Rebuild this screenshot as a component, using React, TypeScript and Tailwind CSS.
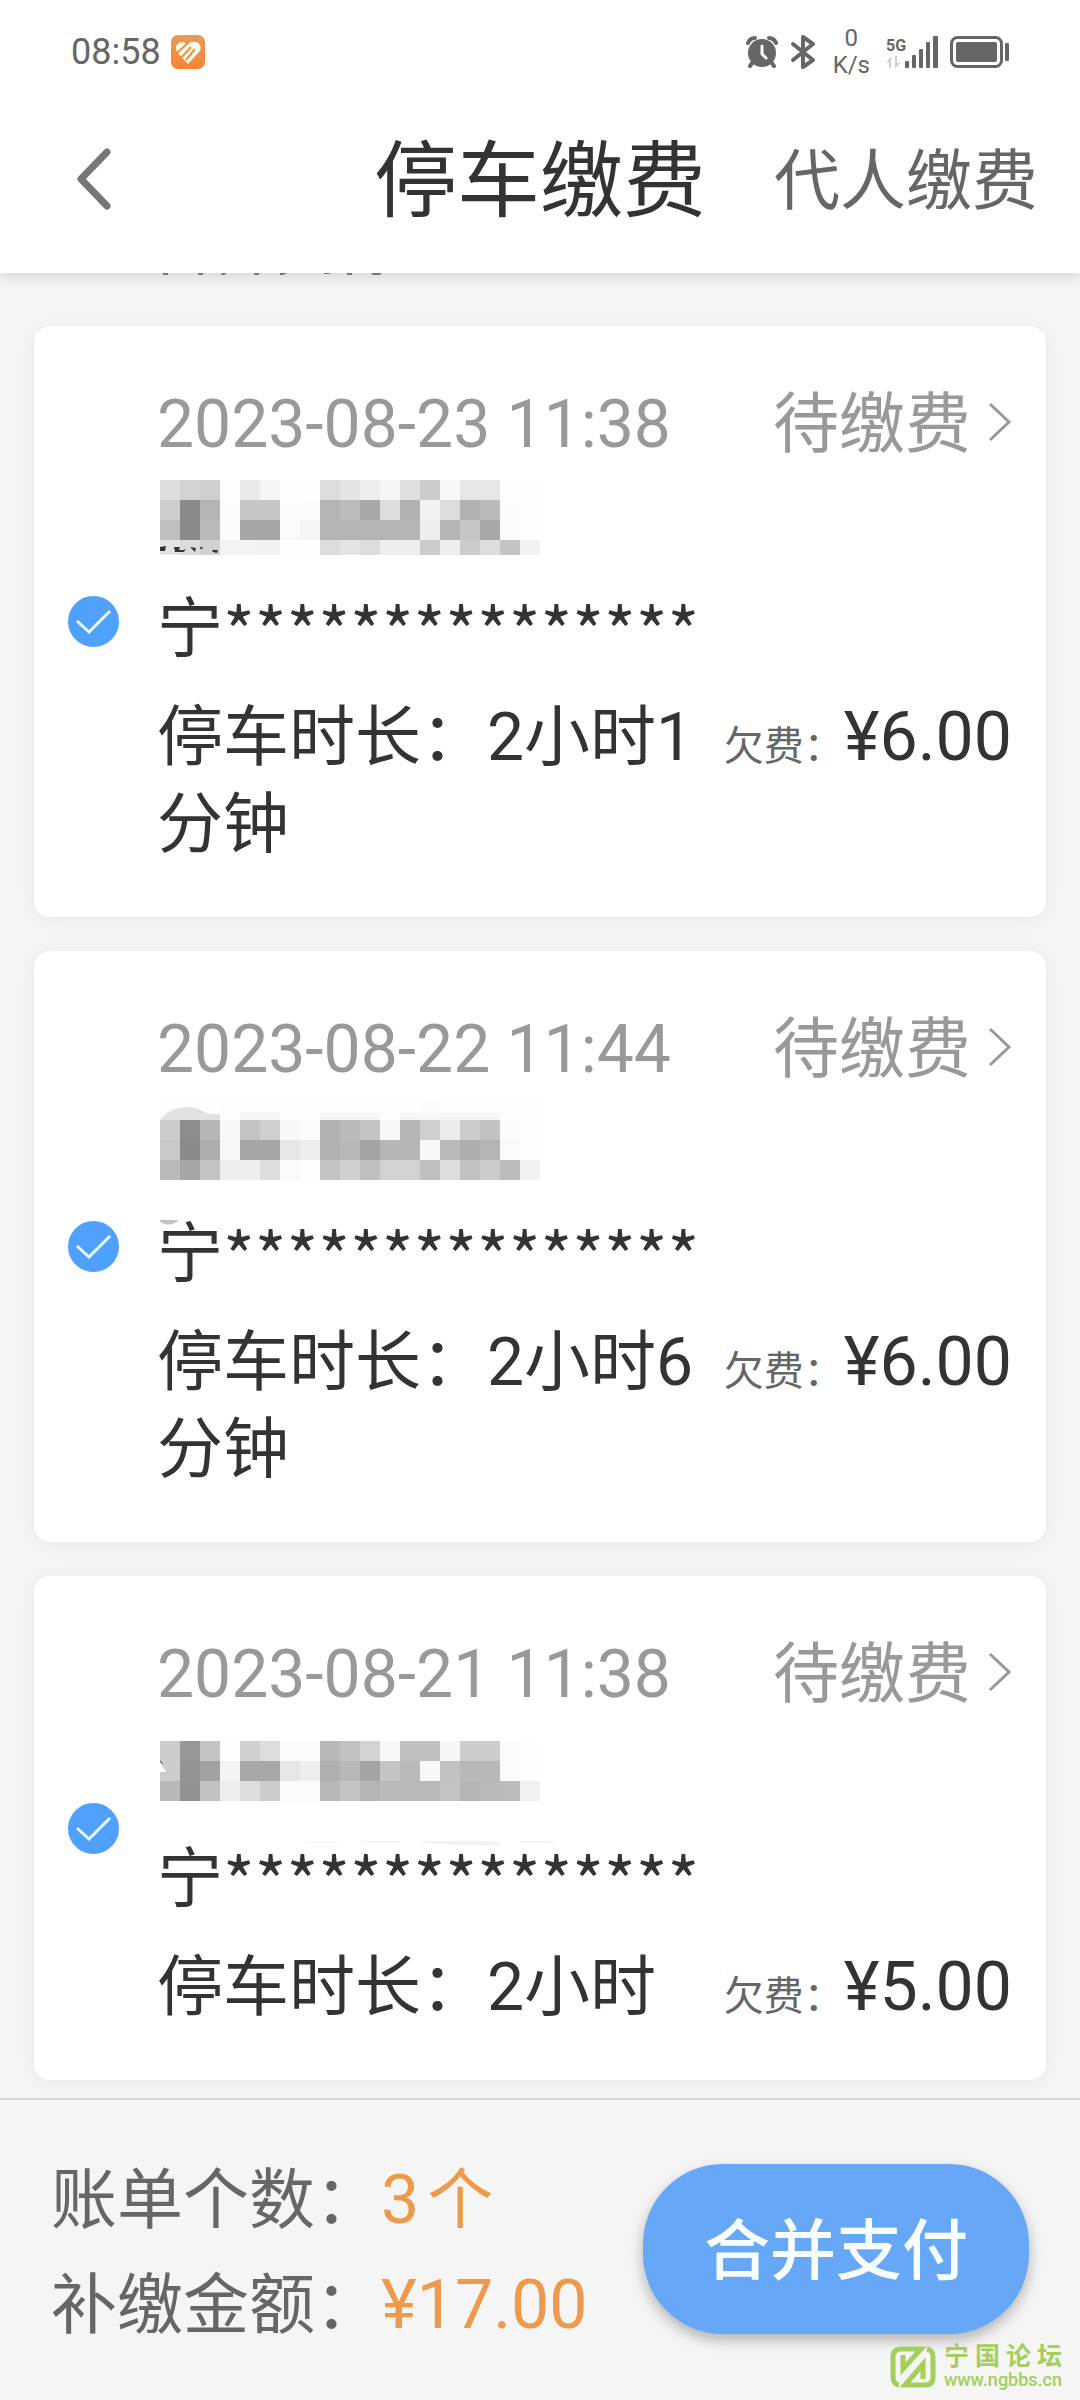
import { useState } from "react";

type Bill = {
  id: string;
  time: string;
  plate: string;
  duration: string;
  fee: number;
  mask: { top: number; rows: string[]; marks?: { d: string; fill: string }[] };
};

/* Each mask row lists two-digit hex grey levels, one for each 20px block. */
const bills: Bill[] = [
  {
    id: "b1",
    time: "2023-08-23 11:38",
    plate: "***************",
    duration: "2小时1分钟",
    fee: 6,
    mask: {
      top: 0,
      rows: [
        "dd d2 cf fd ea f5 fe fe dd e4 ee f5 e0 cc f8 e6 e6 fe fe",
        "ce 8a b4 fc c6 c6 fc fb b4 bc a8 dd b2 f2 dd b2 ba fc fe",
        "bf 8a ba fc a6 a6 fa f5 b4 b4 b4 b4 b4 ee b4 c6 a8 fa fe",
        "e4 dc d2 f4 f4 f2 fe fe dd e4 dd ee ee cc ee cc dd c4 f2",
      ],
      marks: [
        { d: "M0 67l6-1-1 5-5 0zM14 67h6l-1 3 5 0 2-2-2 4h-9zM30 67l6 1-1 4zM40 67l3 0-2 3zM52 70l6 0-1 3-4-1z", fill: "#333333" },
      ],
    },
  },
  {
    id: "b2",
    time: "2023-08-22 11:44",
    plate: "***************",
    duration: "2小时6分钟",
    fee: 6,
    mask: {
      top: -5,
      rows: [
        "fe fe fe fd fe fe fe fe fe fe fe fe fe fc fe fe fe fe fe",
        "cc 8c b6 f8 c4 cf f8 fb b2 ba c4 f8 b6 cf ec cc c2 fb fe",
        "c8 8a ae f8 a6 a6 e6 ee b2 b8 a4 b6 b6 f8 ba ae b4 fa fe",
        "ba a6 c4 ee ee dd fa fe c4 d0 c0 d2 d2 c0 dd c2 cc bc f2",
      ],
      marks: [
        { d: "M0 15Q8 3 27 2Q38 2 48 9L60 9V15Z", fill: "#e2e2e2" },
        { d: "M80 7H120V15H80ZM160 8H220V15H160ZM240 8H340V15H240Z", fill: "#f6f6f6" },
        { d: "M0 115H19Q10 123 0 117Z", fill: "#c4c4c4" },
      ],
    },
  },
  {
    id: "b3",
    time: "2023-08-21 11:38",
    plate: "***************",
    duration: "2小时",
    fee: 5,
    mask: {
      top: 11,
      rows: [
        "cc 98 c4 fd d0 dd fb fb b8 c2 d2 f8 c0 c0 f6 cc cc fb fe",
        "cc 94 a2 f4 a8 a8 e6 ee b0 b8 a4 c4 ba f8 c2 b8 b8 fb fe",
        "b8 92 c2 ee dd cc fa fa b8 c4 b4 ba ba ba c4 b4 ba bc f2",
      ],
      marks: [
        { d: "M0 32L6 42H0Z", fill: "#ffffff" },
        { d: "M0 30l3 4-2-1z", fill: "#333333" },
        { d: "M150 112h30v1h-40zM200 111h40v2h-30zM260 111h80v5l-70-2zM360 111h36l-8 2h-28z", fill: "#f3f3f3" },
      ],
    },
  },
];

const money = (n: number) => `¥${n.toFixed(2)}`;

function AppBadge() {
  return (
    <svg width="36" height="36" viewBox="0 0 36 36" aria-hidden="true">
      <defs>
        <linearGradient id="badge" x1="0" y1="0" x2="0" y2="1">
          <stop offset="0" stopColor="#e79c5b" />
          <stop offset="1" stopColor="#f6842f" />
        </linearGradient>
      </defs>
      <rect x="1" y="1" width="34" height="34" rx="7" fill="url(#badge)" />
      <path d="M18 30L7 18Q4 12 9 9Q14 7 17 10Q23 6 28 9Q33 13 29 18Z" fill="#fffdf2" />
      <path d="M7 19L19 8M11 24L21 13M16 26L25 15" fill="none" stroke="#f09045" strokeWidth="2" />
    </svg>
  );
}

function StatusBar() {
  return (
    <div className="flex h-[104px] items-center pr-[70px] pl-[71px] text-[#666666]">
      <span className="text-[36px] leading-[40px]">08:58</span>
      <span className="ml-[9px]">
        <AppBadge />
      </span>
      <div className="ml-auto flex items-center">
        <svg width="32" height="34" viewBox="0 0 32 34" aria-label="闹钟" role="img">
          <g fill="none" stroke="#666666" strokeLinecap="round">
            <path d="M2 8Q4 3 9 3M30 8Q28 3 23 3" strokeWidth="4" />
            <path d="M7 27L4 31M25 27L28 31" strokeWidth="4" />
          </g>
          <circle cx="16" cy="18" r="14" fill="#666666" />
          <path d="M16 11V19L20 23" fill="none" stroke="#ffffff" strokeWidth="3" strokeLinecap="round" />
        </svg>
        <svg className="ml-[12px]" width="26" height="36" viewBox="0 0 26 36" aria-label="蓝牙" role="img">
          <path
            d="M3 10L23 26L13 33V3L23 10L3 26"
            fill="none"
            stroke="#666666"
            strokeWidth="4"
            strokeLinejoin="round"
            strokeLinecap="round"
          />
        </svg>
        <div className="ml-[17px] flex flex-col items-center text-[24px] leading-[27px]">
          <span>0</span>
          <span>K/s</span>
        </div>
        <div className="ml-[16px] flex items-end">
          <div className="flex w-[19px] flex-col">
            <span className="text-[16px] leading-[20px] font-bold">5G</span>
            <svg width="17" height="12" viewBox="0 0 17 12" aria-hidden="true">
              <path d="M5 0V12H3V6L0 7ZM9 0V12L15 7L11 7V0Z" fill="#cfcfcf" />
            </svg>
          </div>
          <svg width="34" height="32" viewBox="0 0 34 32" aria-label="信号" role="img">
            <g fill="#666666">
              <rect x="0" y="25" width="4" height="7" rx="1" />
              <rect x="7" y="19" width="4" height="13" rx="1" />
              <rect x="14" y="13" width="4" height="19" rx="1" />
              <rect x="21" y="6" width="4" height="26" rx="1" />
              <rect x="28" y="0" width="5" height="32" rx="1" />
            </g>
          </svg>
        </div>
        <svg className="ml-[11px]" width="60" height="32" viewBox="0 0 60 32" aria-label="电量" role="img">
          <rect x="1.500" y="1.500" width="50" height="29" rx="6" fill="none" stroke="#666666" strokeWidth="3" />
          <rect x="6" y="6" width="41" height="20" rx="2" fill="#666666" />
          <rect x="55" y="7" width="4" height="18" rx="1" fill="#666666" />
        </svg>
      </div>
    </div>
  );
}

function Header() {
  return (
    <header className="relative z-10 bg-white pb-[16px] shadow-[0_2px_14px_rgba(0,0,0,0.16)]">
      <StatusBar />
      <nav className="grid h-[153px] grid-cols-[1fr_auto_1fr] items-center px-[42px]">
        <button type="button" aria-label="返回" className="ml-[26px] w-[52px]">
          <svg width="52" height="72" viewBox="0 0 52 72" aria-hidden="true">
            <path
              d="M39 7L13 34L39 61"
              fill="none"
              stroke="#777777"
              strokeWidth="7"
              strokeLinecap="round"
              strokeLinejoin="round"
            />
          </svg>
        </button>
        <h1 className="pt-[2px] text-[83px] leading-[110px] text-[#333333]">停车缴费</h1>
        <a
          href="#other"
          className="justify-self-end pt-[2px] text-[66px] leading-[90px] whitespace-nowrap text-[#666666]"
        >
          代人缴费
        </a>
      </nav>
    </header>
  );
}

function MaskedAddress({ mask }: { mask: Bill["mask"] }) {
  return (
    <svg
      className="mt-[15px] ml-[3px] block overflow-visible"
      width="380"
      height="80"
      viewBox="0 0 380 80"
      shapeRendering="crispEdges"
      role="img"
      aria-label="地址已隐藏"
    >
      {mask.rows.map((row, r) =>
        row
          .split(" ")
          .map((v, c) => (
            <rect
              key={`${r}-${c}`}
              x={c * 20}
              y={mask.top + r * 20}
              width="20"
              height={mask.top === 0 && r === 3 ? 15 : 20}
              fill={`#${v}${v}${v}`}
            />
          )),
      )}
      {mask.marks?.map((m) => (
        <path key={m.d} d={m.d} fill={m.fill} shapeRendering="auto" />
      ))}
    </svg>
  );
}

function BillCard({ bill, checked, onToggle }: { bill: Bill; checked: boolean; onToggle: () => void }) {
  return (
    <li className="flex items-center rounded-[16px] bg-white px-[34px] shadow-[0_2px_16px_rgba(0,0,0,0.06)]">
      <label className="grid w-[89px] shrink-0 cursor-pointer items-center">
        <input
          type="checkbox"
          checked={checked}
          onChange={onToggle}
          aria-label={`选择 ${bill.time} 的账单`}
          className="col-start-1 row-start-1 size-[51px] appearance-none rounded-full border-2 border-[#cccccc] bg-white checked:border-[#50a1fd] checked:bg-[#50a1fd]"
        />
        {checked && (
          <svg
            className="pointer-events-none col-start-1 row-start-1"
            width="51"
            height="51"
            viewBox="0 0 51 51"
            aria-hidden="true"
          >
            <path d="M9 25L21 36L42 15" fill="none" stroke="#e8fbff" strokeWidth="3" />
          </svg>
        )}
      </label>
      <div className="min-w-0 flex-1 pt-[59px] pb-[49px]">
        <div className="flex items-center justify-between text-[66px] leading-[80px] text-[#999999]">
          <time className="whitespace-nowrap">{bill.time}</time>
          <a href={`#${bill.id}`} className="flex items-center whitespace-nowrap">
            待缴费
            <svg className="mb-[6px] ml-[15px]" width="26" height="44" viewBox="0 0 26 44" aria-hidden="true">
              <path d="M4 4L23 22L4 40" fill="none" stroke="#999999" strokeWidth="3" />
            </svg>
          </a>
        </div>
        <MaskedAddress mask={bill.mask} />
        <p className="mt-[23px] flex font-['Noto_Sans_CJK_SC',sans-serif] text-[66px] leading-[80px] whitespace-nowrap text-[#333333]">
          宁<span className="text-[68px] leading-[92px]">{bill.plate}</span>
        </p>
        <div className="mt-[19px] flex items-start justify-between leading-[87px] text-[#333333]">
          <p className="min-w-0 flex-1 text-[66px]">停车时长：{bill.duration}</p>
          <p className="shrink-0 text-[68px] whitespace-nowrap">
            <span className="text-[40px] leading-[40px] text-[#666666]">欠费：</span>
            {money(bill.fee)}
          </p>
        </div>
      </div>
    </li>
  );
}

function Watermark() {
  return (
    <div className="pointer-events-none absolute right-[18px] bottom-[10px] flex items-center gap-2 text-[#a3cf5a]">
      <svg width="46" height="42" viewBox="0 0 46 42" aria-hidden="true">
        <g fill="none" stroke="#a3cf5a" strokeWidth="5">
          <path d="M9 39Q3 38 3 31V11Q3 3 11 3H31L13 23V9" />
          <path d="M37 3Q43 4 43 11V31Q43 39 35 39H15L33 18V33" />
        </g>
      </svg>
      <div className="flex flex-col">
        <span className="flex justify-between text-[25px] leading-[26px] font-bold">
          {"宁国论坛".split("").map((ch) => (
            <span key={ch}>{ch}</span>
          ))}
        </span>
        <span className="text-[18px] leading-[20px] font-medium">www.ngbbs.cn</span>
      </div>
    </div>
  );
}

export default function App() {
  const [selected, setSelected] = useState<string[]>(bills.map((b) => b.id));
  const toggle = (id: string) =>
    setSelected((s) => (s.includes(id) ? s.filter((x) => x !== id) : [...s, id]));
  const total = bills.filter((b) => selected.includes(b.id)).reduce((sum, b) => sum + b.fee, 0);

  return (
    <div
      lang="zh-CN"
      className="flex min-h-screen flex-col bg-[#f5f5f5] font-[Roboto,'Noto_Sans_CJK_SC',sans-serif]"
    >
      <Header />
      <main className="flex-1 px-[34px] pb-[18px]">
        {/* Lower edge of the row scrolled under the header */}
        <svg className="relative z-20 ml-[126px] block" width="240" height="3" viewBox="0 0 240 3" aria-hidden="true">
          <path
            d="M3 0h5v2h-5zM38 0h5v2h-5zM62 0h5l-3 2h-3zM94 0h5v2h-5zM120 0h7l-4 2h-3zM164 0h6v1h-6zM187 0h5v2h-5zM211 0h11l-2 2h-7z"
            fill="#777777"
          />
        </svg>
        <ul className="flex flex-col gap-[34px] pt-[50px]">
          {bills.map((b) => (
            <BillCard key={b.id} bill={b} checked={selected.includes(b.id)} onToggle={() => toggle(b.id)} />
          ))}
        </ul>
      </main>
      <footer className="relative flex items-start justify-between border-t-2 border-[#dadada] pt-[48px] pr-[51px] pb-[42px] pl-[51px]">
        <dl className="grid grid-cols-[auto_auto] text-[66px] leading-[105px] text-[#666666]">
          <dt>账单个数：</dt>
          <dd className="flex gap-2 text-[#ed9a4c]">
            <span className="text-[68px]">{selected.length}</span>个
          </dd>
          <dt>补缴金额：</dt>
          <dd className="text-[68px] text-[#ed9a4c]">{money(total)}</dd>
        </dl>
        <button
          type="button"
          className="mt-[16px] h-[170px] rounded-[80px] bg-[#66a7f8] px-[61px] pt-[6px] text-[66px] leading-[90px] font-medium whitespace-nowrap text-[#f8ffff] shadow-[0_6px_14px_rgba(0,0,0,0.28)]"
        >
          合并支付
        </button>
        <Watermark />
      </footer>
    </div>
  );
}
